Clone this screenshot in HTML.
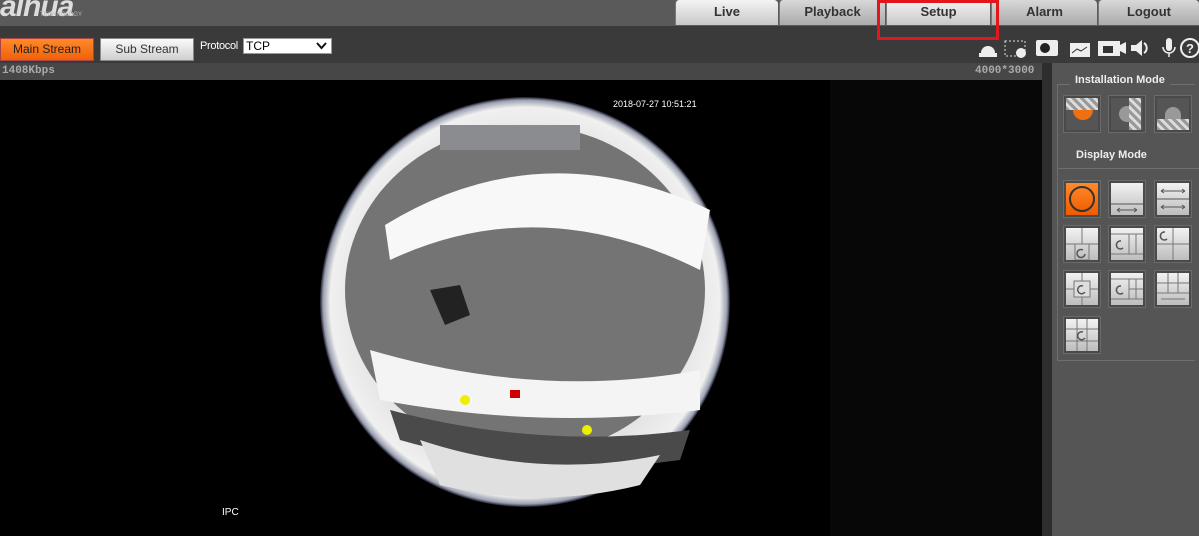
<!DOCTYPE html>
<html><head><style>
*{margin:0;padding:0;box-sizing:border-box}
body{width:1199px;height:536px;overflow:hidden;background:#3a3a3a;font-family:"Liberation Sans",Arial,sans-serif;position:relative}
.abs{position:absolute}
.tab{position:absolute;top:0;height:25px;background:linear-gradient(#f4f4f4,#c8c8c8);border-radius:4px 4px 0 0;font-weight:bold;font-size:13px;color:#333;text-align:center;line-height:24px;border-left:1px solid #777}
.btn{position:absolute;top:38px;height:23px;font-size:12px;text-align:center;line-height:21px}
.ic{position:absolute;width:36px;height:36px;border:2px solid #4a4a4a;background:linear-gradient(#f2f2f2,#bdbdbd);box-shadow:0 0 0 1px #6a6a6a;overflow:hidden}
.ic svg{position:absolute;left:0;top:0}
</style></head><body>
<div class="abs" style="left:0;top:0;width:1199px;height:26px;background:#5a5a5a"></div>
<div class="abs" style="left:0;top:-10px;font:italic bold 30px 'Liberation Sans';color:#ddd;letter-spacing:-1px">alhua</div>
<div class="abs" style="left:40px;top:12px;font-size:6px;color:#bbb">TECHNOLOGY</div>
<div class="tab" style="left:675px;width:103px">Live</div>
<div class="tab" style="left:779px;width:106px;background:linear-gradient(#d8d8d8,#ababab)">Playback</div>
<div class="tab" style="left:886px;width:104px">Setup</div>
<div class="tab" style="left:991px;width:106px;background:linear-gradient(#d8d8d8,#ababab)">Alarm</div>
<div class="tab" style="left:1098px;width:101px;background:linear-gradient(#d8d8d8,#ababab)">Logout</div>
<div class="abs" style="left:877px;top:0;width:122px;height:40px;border:3px solid #e3161d"></div>
<div class="btn" style="left:0;width:94px;background:linear-gradient(#ff8a2a,#f0600a);color:#222;border:1px solid #a44">Main Stream</div>
<div class="btn" style="left:100px;width:94px;background:linear-gradient(#fafafa,#cfcfcf);color:#333;border:1px solid #888">Sub Stream</div>
<div class="abs" style="left:200px;top:40px;font-size:11px;color:#fff;letter-spacing:-0.3px">Protocol</div>
<div class="abs" style="left:243px;top:38px;width:89px;height:16px;background:#fff;border:1px solid #999;font-size:12px;line-height:14px;padding-left:2px">TCP<svg style="position:absolute;right:4px;top:3px" width="11" height="8"><path d="M1 1l4.5 5 4.5-5" stroke="#111" stroke-width="2" fill="none"/></svg></div>
<svg class="abs" style="left:975px;top:36px" width="224" height="24">
<path d="M6 17 a7 7 0 0 1 14 0z" fill="#eee"/><rect x="4" y="17" width="18" height="4" fill="#eee"/>
<rect x="30" y="5" width="20" height="15" fill="none" stroke="#ddd" stroke-dasharray="2 2"/><circle cx="46" cy="17" r="5" fill="#eee"/>
<rect x="61" y="4" width="22" height="16" rx="2" fill="#eee"/><circle cx="70" cy="12" r="5" fill="#222"/>
<rect x="95" y="7" width="20" height="14" fill="#eee"/><path d="M97 17 l5-4 4 2 6-4" stroke="#333" fill="none"/>
<rect x="123" y="5" width="22" height="15" fill="#eee"/><path d="M145 9 l6-3v12l-6-3z" fill="#eee"/><rect x="128" y="10" width="10" height="7" fill="#333"/>
<path d="M156 9h5l6-5v16l-6-5h-5z" fill="#eee"/><path d="M169 7a6 6 0 0 1 0 10" stroke="#eee" stroke-width="2" fill="none"/>
<rect x="191" y="2" width="6" height="13" rx="3" fill="#eee"/><path d="M188 11a6 6 0 0 0 12 0M194 17v4" stroke="#eee" fill="none" stroke-width="1.5"/>
<circle cx="215" cy="12" r="9" fill="none" stroke="#eee" stroke-width="2"/><text x="211" y="17" font-size="13" font-weight="bold" fill="#eee" font-family="Liberation Sans">?</text>
</svg>
<div class="abs" style="left:0;top:63px;width:1042px;height:17px;background:#474747"></div>
<div class="abs" style="left:2px;top:65px;font:bold 11px 'Liberation Mono';color:#aaa">1408Kbps</div>
<div class="abs" style="left:975px;top:65px;font:bold 11px 'Liberation Mono';color:#aaa">4000*3000</div>
<div class="abs" style="left:0;top:80px;width:1042px;height:456px;background:#000"></div>
<div class="abs" style="left:830px;top:80px;width:212px;height:456px;background:#070707"></div>
<svg class="abs" style="left:0;top:80px" width="830" height="456">
<defs><radialGradient id="g" cx="0.5" cy="0.5" r="0.5"><stop offset="0.8" stop-color="#e4e4e4"/><stop offset="0.95" stop-color="#f0f0f0"/><stop offset="0.985" stop-color="#9aa0b0"/><stop offset="1" stop-color="#1a1a2a"/></radialGradient></defs>
<circle cx="525" cy="222" r="205" fill="url(#g)"/>
<ellipse cx="525" cy="210" rx="180" ry="165" fill="#747474"/>
<rect x="440" y="45" width="140" height="25" fill="#8a8c90"/>
<path d="M385 145 Q540 50 710 130 L700 190 Q540 110 390 180 z" fill="#f8f8f8"/>
<path d="M370 270 Q540 320 700 290 L700 330 Q540 350 380 320 z" fill="#f4f4f4"/>
<path d="M390 330 Q540 370 690 350 L680 380 Q540 400 400 360 z" fill="#4a4a4a"/>
<path d="M420 360 Q540 400 660 375 L640 405 Q540 430 440 405 z" fill="#e0e0e0"/>
<path d="M430 210 l30 -5 10 30 -25 10z" fill="#222"/>
<circle cx="465" cy="320" r="5" fill="#ee0"/><circle cx="587" cy="350" r="5" fill="#ee0"/><rect x="510" y="310" width="10" height="8" fill="#c00"/>
</svg>
<div class="abs" style="left:613px;top:99px;font-size:9px;color:#fff">2018-07-27 10:51:21</div>
<div class="abs" style="left:222px;top:507px;font-size:10px;color:#fff">IPC</div>
<div class="abs" style="left:1042px;top:63px;width:10px;height:473px;background:#2e2e2e"></div>
<div class="abs" style="left:1052px;top:63px;width:147px;height:473px;background:#555"></div>
<div class="abs" style="left:1057px;top:84px;width:138px;height:277px;border:1px solid #6e6e6e;border-right:none"></div>
<div class="abs" style="left:1070px;top:74px;padding:0 5px;background:#555;font:bold 11px 'Liberation Sans';color:#eee">Installation Mode</div>
<div class="abs" style="left:1076px;top:149px;font:bold 11px 'Liberation Sans';color:#eee">Display Mode</div>
<div class="abs" style="left:1057px;top:168px;width:142px;border-top:1px solid #6e6e6e"></div>
<div class="ic" style="left:1064px;top:96px;background:repeating-linear-gradient(45deg,#999 0 3px,#ddd 3px 6px) top/100% 12px no-repeat,#555"><div style="position:absolute;left:7px;top:12px;width:20px;height:10px;border-radius:0 0 10px 10px;background:#f07010"></div></div>
<div class="ic" style="left:1109px;top:96px;background:#555"><div style="position:absolute;right:2px;top:0;width:12px;height:32px;background:repeating-linear-gradient(45deg,#999 0 3px,#ddd 3px 6px)"></div><div style="position:absolute;left:8px;top:8px;width:10px;height:16px;border-radius:10px 0 0 10px;background:#999"></div></div>
<div class="ic" style="left:1155px;top:96px;background:#555"><div style="position:absolute;left:0;bottom:0;width:32px;height:11px;background:repeating-linear-gradient(45deg,#999 0 3px,#ddd 3px 6px)"></div><div style="position:absolute;left:8px;top:9px;width:16px;height:12px;border-radius:10px 10px 0 0;background:#999"></div></div>
<div class="ic" style="left:1064px;top:181px;background:linear-gradient(#ff8a2a,#f05a00)"><div style="position:absolute;left:3px;top:3px;width:26px;height:26px;border-radius:50%;border:2px solid #333"></div></div>
<div class="ic" style="left:1109px;top:181px"><svg width="32" height="32"><path d="M0 21h32M6 27h20M6 27l3-2M6 27l3 2M26 27l-3-2M26 27l-3 2" stroke="#555" fill="none"/></svg></div>
<div class="ic" style="left:1155px;top:181px"><svg width="32" height="32"><path d="M0 16h32M4 8h24M4 24h24M4 8l3-2M4 8l3 2M28 8l-3-2M28 8l-3 2M4 24l3-2M4 24l3 2M28 24l-3-2M28 24l-3 2" stroke="#555" fill="none"/></svg></div>
<div class="ic" style="left:1064px;top:226px"><svg width="32" height="32"><path d="M16 0v16M0 16h32" stroke="#777"/><rect x="9" y="16" width="14" height="16" fill="none" stroke="#777"/><path d="M19 26a4 4 0 1 1 -2-4" stroke="#555" fill="none" stroke-width="1.5"/></svg></div>
<div class="ic" style="left:1109px;top:226px"><svg width="32" height="32"><path d="M0 6h32M0 26h32M18 6v20M25 6v20" stroke="#777"/><path d="M12 20a4 4 0 1 1 -2-7" stroke="#555" fill="none" stroke-width="1.5"/></svg></div>
<div class="ic" style="left:1155px;top:226px"><svg width="32" height="32"><path d="M16 0v32M0 16h32" stroke="#777"/><path d="M10 11a4 4 0 1 1 -2-7" stroke="#555" fill="none" stroke-width="1.5"/></svg></div>
<div class="ic" style="left:1064px;top:271px"><svg width="32" height="32"><path d="M16 0v32M0 16h32" stroke="#777"/><rect x="8" y="8" width="16" height="16" fill="#ddd" stroke="#777"/><path d="M19 19a4 4 0 1 1 -2-6" stroke="#555" fill="none" stroke-width="1.5"/></svg></div>
<div class="ic" style="left:1109px;top:271px"><svg width="32" height="32"><path d="M0 6h32M0 26h32M18 6v20M25 6v20M18 16h14" stroke="#777"/><path d="M12 20a4 4 0 1 1 -2-7" stroke="#555" fill="none" stroke-width="1.5"/></svg></div>
<div class="ic" style="left:1155px;top:271px"><svg width="32" height="32"><path d="M11 0v20M21 0v20M0 10h32M0 20h32M4 26h24" stroke="#777"/></svg></div>
<div class="ic" style="left:1064px;top:317px"><svg width="32" height="32"><path d="M11 0v32M21 0v32M0 10h32M0 22h32" stroke="#777"/><path d="M19 19a4 4 0 1 1 -2-6" stroke="#555" fill="none" stroke-width="1.5"/></svg></div>
</body></html>
